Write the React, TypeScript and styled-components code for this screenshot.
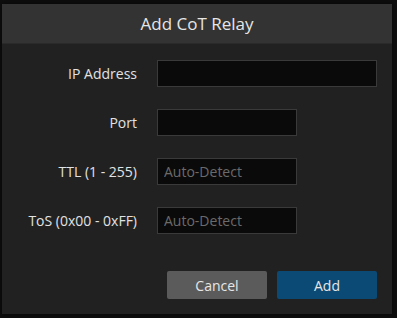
import { Fragment } from 'react';
import styled, { createGlobalStyle } from 'styled-components';

const GlobalStyle = createGlobalStyle`
  html, body {
    margin: 0;
    padding: 0;
    background: #0e0e0e;
    font-family: "Open Sans", "Liberation Sans", sans-serif;
  }
`;

const Page = styled.div`
  width: 397px;
  height: 318px;
  padding: 4px 0 0 2px;
  box-sizing: border-box;
`;

const Dialog = styled.div`
  width: 390px;
  height: 310px;
  background: #212121;
  display: flex;
  flex-direction: column;
  box-shadow: 0 0 6px rgba(0, 0, 0, 0.6);
`;

const Header = styled.div`
  height: 40px;
  background: #333333;
  border-bottom: 1px solid #2a2a2a;
  box-sizing: border-box;
  display: flex;
  align-items: center;
  justify-content: center;
  color: #e6e6e6;
  font-size: 17px;
`;

const Form = styled.div`
  display: grid;
  grid-template-columns: 135px 1fr;
  column-gap: 20px;
  row-gap: 22px;
  padding: 16px 15px 0 0;
`;

const Label = styled.label`
  color: #e2e2e2;
  font-size: 14px;
  text-align: right;
  line-height: 27px;
  white-space: nowrap;
`;

const Input = styled.input<{ $w: number }>`
  display: block;
  width: ${(p) => p.$w}px;
  height: 27px;
  box-sizing: border-box;
  background: #0a0a0a;
  border: 1px solid #3a3a3a;
  color: #ddd;
  font-family: inherit;
  font-size: 14px;
  padding: 0 6px;
  outline: none;

  &::placeholder {
    color: #6a6a6a;
  }
`;

const Footer = styled.div`
  display: flex;
  justify-content: flex-end;
  gap: 10px;
  padding: 37px 15px 0 0;
`;

const Button = styled.button<{ $primary?: boolean }>`
  width: 100px;
  height: 28px;
  border: none;
  border-radius: 2px;
  background: ${(p) => (p.$primary ? '#0b4a75' : '#5b5b5b')};
  color: #e6e6e6;
  font-family: inherit;
  font-size: 14px;
  cursor: pointer;
`;

const fields = [
  { label: 'IP Address', width: 220, placeholder: '' },
  { label: 'Port', width: 140, placeholder: '' },
  { label: 'TTL (1 - 255)', width: 140, placeholder: 'Auto-Detect' },
  { label: 'ToS (0x00 - 0xFF)', width: 140, placeholder: 'Auto-Detect' },
];

export default function App() {
  return (
    <>
      <GlobalStyle />
      <Page>
        <Dialog>
          <Header>Add CoT Relay</Header>
          <Form>
            {fields.map((f) => (
              <Fragment key={f.label}>
                <Label>{f.label}</Label>
                <div>
                  <Input $w={f.width} placeholder={f.placeholder} />
                </div>
              </Fragment>
            ))}
          </Form>
          <Footer>
            <Button>Cancel</Button>
            <Button $primary>Add</Button>
          </Footer>
        </Dialog>
      </Page>
    </>
  );
}
